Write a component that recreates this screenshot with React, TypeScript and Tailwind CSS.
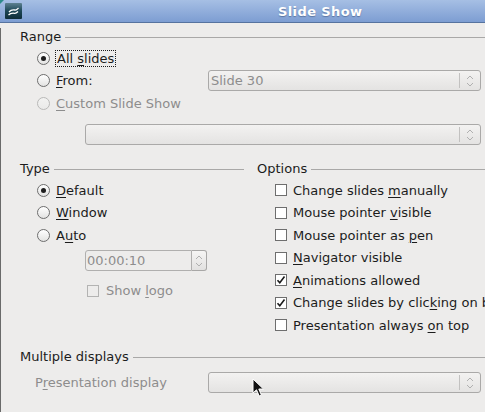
import React from 'react'

const font = { fontFamily: '"DejaVu Sans", "Liberation Sans", sans-serif' }

function Radio({ checked = false, disabled = false }: { checked?: boolean; disabled?: boolean }) {
  return (
    <span
      className={`flex h-[13px] w-[13px] shrink-0 items-center justify-center rounded-full border bg-gradient-to-b ${
        disabled ? 'border-[#b9b9b8] from-[#f2f2f1] to-[#eaeae9]' : 'border-[#6e6e6e] from-[#ffffff] to-[#e3e3e2]'
      }`}
    >
      {checked && <span className="h-[5px] w-[5px] rounded-full bg-[#1e1e1e]" />}
    </span>
  )
}

function Check({ checked = false, disabled = false }: { checked?: boolean; disabled?: boolean }) {
  return (
    <span
      className={`flex h-[12px] w-[12px] shrink-0 items-center justify-center border ${
        disabled ? 'border-[#b3b3b2] bg-[#edeceb]' : 'border-[#6e6e6e] bg-white'
      }`}
    >
      {checked && (
        <svg viewBox="0 0 10 10" className="h-[10px] w-[10px]">
          <path d="M1.5 5.2 L3.8 7.8 L8.5 1.6" fill="none" stroke="#1a1a1a" strokeWidth="1.6" />
        </svg>
      )}
    </span>
  )
}

function Arrows({ light = false }: { light?: boolean }) {
  const c = light ? '#b0b0b0' : '#9a9a9a'
  return (
    <svg viewBox="0 0 8 14" className="h-[14px] w-[8px]">
      <path d="M1 5 L4 2 L7 5" fill="none" stroke={c} strokeWidth="1" />
      <path d="M1 9 L4 12 L7 9" fill="none" stroke={c} strokeWidth="1" />
    </svg>
  )
}

function Combo({ text, className = '' }: { text?: string; className?: string }) {
  return (
    <div
      className={`flex h-[21px] shrink-0 items-center rounded-[3px] border border-[#aaa9a8] bg-gradient-to-b from-[#f3f2f1] to-[#e4e3e2] ${className}`}
    >
      <span className="flex-1 pl-[2px] text-[#8d8d8d]">{text}</span>
      <span className="h-[15px] w-px bg-[#c2c1c0]" />
      <span className="flex w-[20px] items-center justify-center">
        <Arrows light />
      </span>
    </div>
  )
}

function Header({ label, className = '' }: { label: string; className?: string }) {
  return (
    <div className={`flex h-[18px] items-center gap-[4px] ${className}`}>
      <span>{label}</span>
      <span className="h-px flex-1 bg-[#a9a8a7]" />
    </div>
  )
}

function Row({ children }: { children: React.ReactNode }) {
  return <div className="flex h-[22.5px] items-center gap-[6px]">{children}</div>
}

export default function App() {
  return (
    <div className="relative h-[412px] w-[485px] overflow-hidden bg-[#edeceb] text-[13px] text-[#1c1c1c]" style={font}>
      {/* title bar */}
      <div className="relative flex h-[23px] items-center border-b border-[#56739f] bg-gradient-to-b from-[#a6bfe4] to-[#7d9dd2]">
        <span className="absolute left-0 top-0 h-0 w-0 border-r-[4px] border-t-[4px] border-r-transparent border-t-[#2c8a8a]" />
        <svg viewBox="0 0 17 16" className="ml-[5px] h-[16px] w-[17px]">
          <defs>
            <linearGradient id="ic" x1="0" y1="0" x2="0" y2="1">
              <stop offset="0" stopColor="#5d8191" />
              <stop offset="0.5" stopColor="#1c4656" />
              <stop offset="1" stopColor="#0f2d38" />
            </linearGradient>
          </defs>
          <rect x="0" y="0" width="17" height="16" rx="1" fill="url(#ic)" />
          <path d="M4 9 C6 6.5 8 6.5 10 7 C11.5 7.3 12.5 6 13.5 5" fill="none" stroke="#fff" strokeWidth="1.3" />
          <path d="M3.5 12 C5.5 10 7.5 10 9.5 10.3 C11 10.5 12 9.5 13 8.5" fill="none" stroke="#fff" strokeWidth="1.3" />
        </svg>
        <span className="ml-[256px] mt-[1px] text-[13px] font-bold tracking-[0.4px] text-white [text-shadow:0_1px_1px_rgba(40,60,100,0.45)]">
          Slide Show
        </span>
      </div>

      {/* body */}
      <div className="h-[388px] border-b border-l border-[#6a6a6a]">
        <div className="pl-[19px]">
          <Header label="Range" className="mt-[5px]" />
          <div className="mt-[1px] pl-[17px]">
            <Row>
              <Radio checked />
              <span className="-ml-[1px] border border-dotted border-[#1c1c1c] px-[1px] leading-[15px]">
                All <u className="underline-offset-2">s</u>lides
              </span>
            </Row>
            <div className="flex h-[22.5px] items-center">
              <div className="flex w-[171px] shrink-0 items-center gap-[6px]">
                <Radio />
                <span>
                  <u className="underline-offset-2">F</u>rom:
                </span>
              </div>
              <Combo text="Slide 30" className="w-[273px]" />
            </div>
            <Row>
              <Radio disabled />
              <span className="text-[#8d8d8d]">
                <u className="underline-offset-2">C</u>ustom Slide Show
              </span>
            </Row>
          </div>
          <Combo className="ml-[65px] mt-[9.5px] w-[396px]" />
        </div>

        <div className="mt-[15px] flex">
          <div className="w-[243px] shrink-0 pl-[19px]">
            <Header label="Type" />
            <div className="mt-[1px] pl-[17px]">
              <Row>
                <Radio checked />
                <span>
                  <u className="underline-offset-2">D</u>efault
                </span>
              </Row>
              <Row>
                <Radio />
                <span>
                  <u className="underline-offset-2">W</u>indow
                </span>
              </Row>
              <Row>
                <Radio />
                <span>
                  A<u className="underline-offset-2">u</u>to
                </span>
              </Row>
            </div>
            <div className="ml-[65px] mt-[3.5px] flex h-[21px] w-[122px]">
              <div className="flex flex-1 items-center rounded-l-[3px] border border-[#b0afae] bg-[#edeceb] pl-[1px] text-[#8d8d8d]">
                00:00:10
              </div>
              <div className="flex w-[15px] items-center justify-center rounded-r-[3px] border border-l-0 border-[#a8a7a6] bg-gradient-to-b from-[#f6f5f4] to-[#e2e1e0]">
                <Arrows light />
              </div>
            </div>
            <div className="ml-[67px] mt-[9px] flex h-[22px] items-center gap-[7px] text-[#8d8d8d]">
              <Check disabled />
              <span>
                Show <u className="underline-offset-2">l</u>ogo
              </span>
            </div>
          </div>

          <div className="min-w-0 flex-1 overflow-hidden pl-[13px]">
            <Header label="Options" />
            <div className="mt-[1px] whitespace-nowrap pl-[18px]">
              <Row>
                <Check />
                <span>
                  Change slides <u className="underline-offset-2">m</u>anually
                </span>
              </Row>
              <Row>
                <Check />
                <span>
                  Mouse pointer <u className="underline-offset-2">v</u>isible
                </span>
              </Row>
              <Row>
                <Check />
                <span>
                  Mouse pointer as <u className="underline-offset-2">p</u>en
                </span>
              </Row>
              <Row>
                <Check />
                <span>
                  <u className="underline-offset-2">N</u>avigator visible
                </span>
              </Row>
              <Row>
                <Check checked />
                <span>
                  <u className="underline-offset-2">A</u>nimations allowed
                </span>
              </Row>
              <Row>
                <Check checked />
                <span>
                  Change slides by clic<u className="underline-offset-2">k</u>ing on b
                </span>
              </Row>
              <Row>
                <Check />
                <span>
                  Presentation always <u className="underline-offset-2">o</u>n top
                </span>
              </Row>
            </div>
          </div>
        </div>

        <div className="mt-[11.5px] pl-[19px]">
          <Header label="Multiple displays" />
          <div className="mt-[6px] flex h-[21px] items-center">
            <span className="w-[188px] shrink-0 pl-[15px] text-[#8d8d8d]">
              P<u className="underline-offset-2">r</u>esentation display
            </span>
            <Combo className="w-[273px]" />
          </div>
        </div>
      </div>

      {/* mouse pointer */}
      <svg viewBox="0 0 13 20" className="absolute left-[252px] top-[378px] h-[20px] w-[13px]">
        <path d="M1 1 L1 15 L4.5 11.8 L7.2 18 L9.4 17 L6.8 11 L11.5 11 Z" fill="#111" stroke="#fff" strokeWidth="1" strokeLinejoin="round" />
      </svg>
    </div>
  )
}
